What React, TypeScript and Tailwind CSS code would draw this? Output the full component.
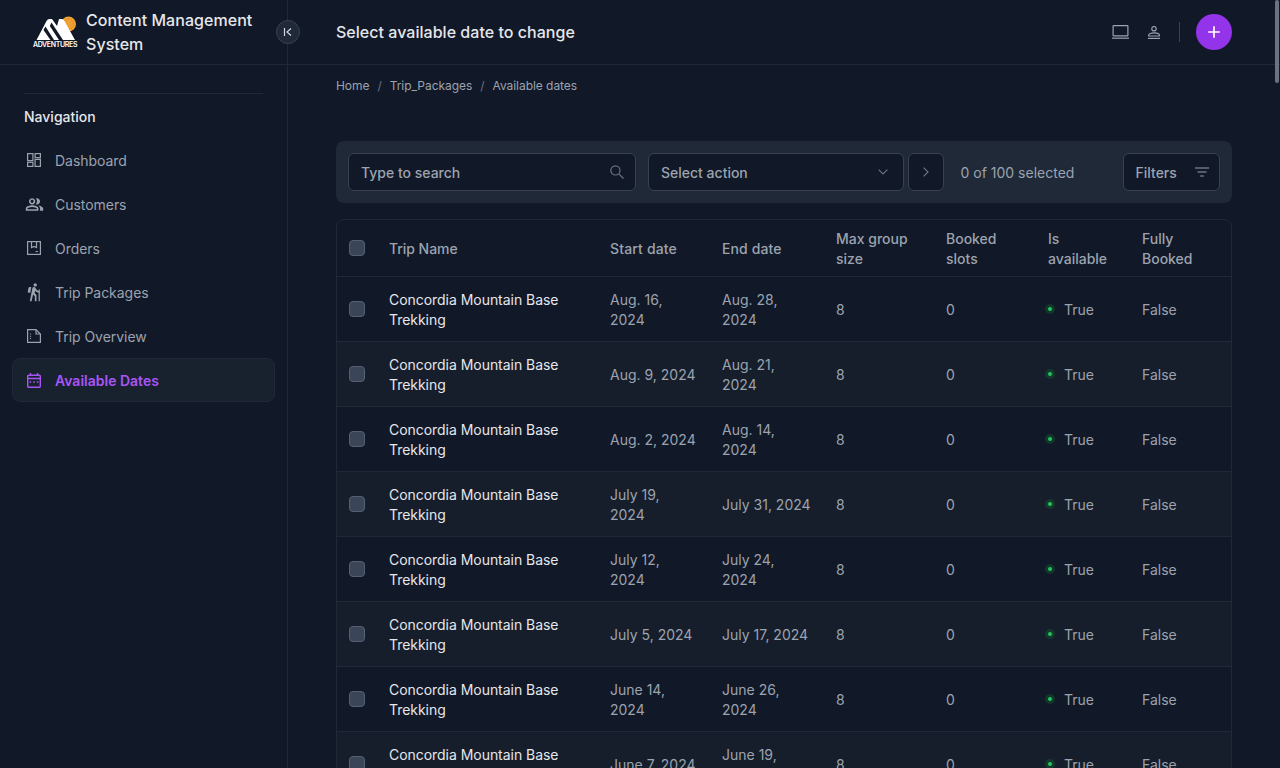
import { MdOutlinePeopleAlt, MdHiking, MdAdd } from "react-icons/md";

const font = { fontFamily: "Inter, 'Liberation Sans', sans-serif" };

function Stroke({ w, h, sw = 1.2, children }: { w: number; h: number; sw?: number; children: React.ReactNode }) {
  return (
    <svg width={w} height={h} viewBox={`0 0 ${w} ${h}`} fill="none" stroke="currentColor" strokeWidth={sw}>
      {children}
    </svg>
  );
}

const DashboardIcon = () => (
  <Stroke w={14} h={14}>
    <rect x="0.6" y="0.6" width="5.3" height="7" />
    <rect x="0.6" y="9.3" width="5.3" height="4.1" />
    <rect x="8.1" y="0.6" width="5.3" height="4.1" />
    <rect x="8.1" y="6.4" width="5.3" height="7" />
  </Stroke>
);
const PackageIcon = () => (
  <Stroke w={14} h={14}>
    <rect x="0.6" y="0.6" width="12.8" height="12.8" />
    <path d="M4.5 1v5.5l2.5-1 2.5 1V1M8.5 10.5h2.5" />
  </Stroke>
);
const NoteIcon = () => (
  <Stroke w={14} h={14}>
    <path d="M0.6 0.6h8.4l4.4 4.4v8.4H0.6z" />
    <path d="M9 1v4h4.2M3.5 4.5v.9M3.5 6.8v.9M3.5 9.1v.9" />
  </Stroke>
);
const CalendarIcon = () => (
  <Stroke w={14} h={15} sw={1.4}>
    <rect x="0.7" y="2.2" width="12.6" height="12.1" rx="1" />
    <path d="M3.5 0v3M10.5 0v3M1 5.5h12" />
    <path d="M2.6 9h1.6M6.2 9h1.6M9.8 9h1.6" />
  </Stroke>
);
const LaptopIcon = () => (
  <Stroke w={17} h={14}>
    <rect x="1.1" y="0.6" width="14.8" height="10.3" rx="0.6" />
    <path d="M0 13.2h17" />
  </Stroke>
);
const PersonIcon = () => (
  <Stroke w={12} h={13}>
    <circle cx="6" cy="2.7" r="2.2" />
    <path d="M0.6 10V9.4c0-1.5 2.6-2.5 5.4-2.5s5.4 1 5.4 2.5V10z" />
    <path d="M0 12.4h12" />
  </Stroke>
);
const SearchIcon = () => (
  <Stroke w={14} h={14}>
    <circle cx="5.4" cy="5.4" r="4.6" />
    <path d="M8.8 8.8l4.7 4.7" />
  </Stroke>
);
const FilterIcon = () => (
  <Stroke w={14} h={10} sw={1.3}>
    <path d="M0 1h14M2.5 5h9M5.2 9h3.6" />
  </Stroke>
);
const DownIcon = () => (
  <Stroke w={10} h={6}>
    <path d="M0.6 0.6 5 5l4.4-4.4" />
  </Stroke>
);
const RightIcon = () => (
  <Stroke w={6} h={10}>
    <path d="M0.6 0.6 5 5 0.6 9.4" />
  </Stroke>
);

function Logo() {
  return (
    <div className="flex w-[44px] flex-col items-center">
      <svg width="44" height="25" viewBox="0 0 44 25">
        <circle cx="35.5" cy="8" r="7.5" fill="#f0a030" />
        <circle cx="35.5" cy="8" r="5" fill="none" stroke="#b8802e" strokeWidth="0.6" strokeDasharray="1 1" />
        <path d="M3.5 24 13.5 5Q14.5 3 16.5 3L19 3 24 10 26 3 28.5 3Q30.5 3 31.5 5L42 24z" fill="#fff" />
        <path d="M12.5 10.5 21 24H17.5L10.5 14z" fill="#111827" />
        <path d="M18.5 6.5 30 24H26L16.8 10z" fill="#111827" />
      </svg>
      <span className="mt-[-1px] text-[7px] leading-[9px] font-semibold tracking-[-0.35px] whitespace-nowrap text-white">ADVENTURES</span>
    </div>
  );
}

const nav = [
  { label: "Dashboard", icon: <DashboardIcon /> },
  { label: "Customers", icon: <MdOutlinePeopleAlt size={19} /> },
  { label: "Orders", icon: <PackageIcon /> },
  { label: "Trip Packages", icon: <MdHiking size={20} /> },
  { label: "Trip Overview", icon: <NoteIcon /> },
];

const rows = [
  ["Aug. 16, 2024", "Aug. 28, 2024"],
  ["Aug. 9, 2024", "Aug. 21, 2024"],
  ["Aug. 2, 2024", "Aug. 14, 2024"],
  ["July 19, 2024", "July 31, 2024"],
  ["July 12, 2024", "July 24, 2024"],
  ["July 5, 2024", "July 17, 2024"],
  ["June 14, 2024", "June 26, 2024"],
  ["June 7, 2024", "June 19, 2024"],
];

const headers = [
  { label: "Trip Name", cls: "px-3 pt-[2px] font-medium tracking-[-0.05px]" },
  { label: "Start date", cls: "px-3 pt-[2px] font-medium tracking-[0.15px]" },
  { label: "End date", cls: "px-3 pt-[2px] font-medium tracking-[0.1px]" },
  { label: "Max group size", cls: "px-3 pt-[2px] font-medium" },
  { label: "Booked slots", cls: "px-3 pt-[2px] font-medium" },
  { label: "Is available", cls: "px-3 pt-[2px] font-medium" },
  { label: "Fully Booked", cls: "px-3 pt-[2px] font-medium" },
];

function Checkbox() {
  return <div className="h-4 w-4 rounded border border-[#566073] bg-[#3a4557]" />;
}

export default function App() {
  return (
    <div style={font} className="relative flex h-screen overflow-hidden bg-[#111827] text-sm text-[#9ca3af] antialiased">
      <aside className="flex w-[288px] shrink-0 flex-col border-r border-[#1f2937]">
        <div className="relative flex h-[65px] shrink-0 items-center gap-[9px] border-b border-[#1f2937] pl-[33px]">
          <Logo />
          <div className="text-base leading-6 font-medium tracking-[0.05px] text-[#e5e7eb]">Content Management System</div>
          <button className="absolute top-[20px] right-[-13px] flex h-6 w-6 items-center justify-center rounded-full border border-[#374151] bg-[#1f2937] text-[#d1d5db]">
            <svg width="10" height="10" viewBox="0 0 10 10" fill="none" stroke="currentColor" strokeWidth="1.2"><path d="M1.5 1v8M8 1.5 4 5l4 3.5" /></svg>
          </button>
        </div>
        <div className="flex flex-col px-3 pt-7">
          <div className="mx-3 border-t border-[#1f2937] pt-[13px] pb-[11px] font-medium text-[#e5e7eb]">Navigation</div>
          <nav className="flex flex-col">
            {nav.map((n) => (
              <div key={n.label} className="flex h-11 items-center gap-[11px] px-3">
                <span className="flex h-5 w-5 items-center justify-center">{n.icon}</span>
                <span className="pt-[2px] tracking-[-0.04px]">{n.label}</span>
              </div>
            ))}
            <div className="flex h-11 items-center gap-[11px] rounded-lg border border-[#1f2937] bg-[#18212e] px-[11px] font-semibold text-[#a855f7]">
              <span className="flex h-5 w-5 items-center justify-center"><CalendarIcon /></span>
              <span className="pt-[2px]">Available Dates</span>
            </div>
          </nav>
        </div>
      </aside>

      <main className="flex min-w-0 flex-1 flex-col">
        <header className="flex h-[65px] shrink-0 items-center justify-between border-b border-[#1f2937] px-[48px]">
          <h1 className="text-base font-medium tracking-[0.03px] text-[#e5e7eb]">Select available date to change</h1>
          <div className="flex items-center">
            <span className="mr-[19px] flex"><LaptopIcon /></span>
            <span className="mr-[19px] flex"><PersonIcon /></span>
            <div className="mr-[16px] h-5 border-l border-[#374151]" />
            <div className="flex h-9 w-9 items-center justify-center rounded-full bg-[#9333ea] text-white"><MdAdd size={20} /></div>
          </div>
        </header>

        <div className="flex flex-col px-[48px]">
          <div className="flex h-[42px] items-center gap-2 text-xs tracking-[-0.05px]">
            <span>Home</span><span className="text-[#6b7280]">/</span><span>Trip_Packages</span><span className="text-[#6b7280]">/</span><span>Available dates</span>
          </div>

          <div className="mt-[34px] flex h-[62px] items-center rounded-lg bg-[#1f2937] px-3">
            <div className="flex h-[38px] w-[288px] items-center justify-between rounded-md border border-[#374151] bg-[#111827] pr-[11px] pl-3 font-medium text-[#9ca3af]">
              <span className="pt-[2px]">Type to search</span>
              <span className="flex text-[#6b7280]"><SearchIcon /></span>
            </div>
            <div className="ml-3 flex h-[38px] w-[256px] items-center justify-between rounded-md border border-[#374151] bg-[#111827] pr-[15px] pl-3 font-medium">
              <span className="pt-[2px]">Select action</span>
              <span className="flex text-[#6b7280]"><DownIcon /></span>
            </div>
            <div className="ml-1 flex h-[38px] w-9 items-center justify-center rounded-md border border-[#374151] bg-[#111827] text-[#6b7280]"><RightIcon /></div>
            <span className="ml-[16.5px] pt-[2px]">0 of 100 selected</span>
            <div className="ml-auto flex h-[38px] w-[97px] items-center justify-between rounded-md border border-[#374151] bg-[#111827] pr-[10px] pl-[11.5px] font-medium">
              <span className="pt-[2px]">Filters</span>
              <span className="flex text-[#6b7280]"><FilterIcon /></span>
            </div>
          </div>

          <div className="mt-4 overflow-hidden rounded-lg border border-[#1f2937]">
            <table className="w-full table-fixed border-collapse">
              <colgroup>
                <col className="w-[40px]" />
                <col className="w-[221px]" />
                <col className="w-[112px]" />
                <col className="w-[114px]" />
                <col className="w-[110px]" />
                <col className="w-[102px]" />
                <col className="w-[94px]" />
                <col />
              </colgroup>
              <thead>
                <tr className="h-[56px] text-left">
                  <th className="pl-3"><Checkbox /></th>
                  {headers.map((h) => (
                    <th key={h.label} className={h.cls}>{h.label}</th>
                  ))}
                </tr>
              </thead>
              <tbody>
                {rows.map((r, i) => (
                  <tr key={i} className={`h-[65px] border-t border-[#1f2937] ${i % 2 === 1 ? "bg-[#161e2b]" : ""}`}>
                    <td className="pl-3"><Checkbox /></td>
                    <td className="px-3 pt-[2px] tracking-[-0.04px] text-[#e5e7eb]">Concordia Mountain Base Trekking</td>
                    <td className="px-3 pt-[2px]">{r[0]}</td>
                    <td className="px-3 pt-[2px]">{r[1]}</td>
                    <td className="px-3 pt-[2px]">8</td>
                    <td className="px-3 pt-[2px]">0</td>
                    <td className="pr-3 pl-[9px]">
                      <span className="flex items-center gap-[9px]">
                        <span className="flex h-[10px] w-[10px] items-center justify-center rounded-full bg-[#14532d]/50"><span className="h-1 w-1 rounded-full bg-[#22c55e]" /></span>
                        <span className="pt-[2px]">True</span>
                      </span>
                    </td>
                    <td className="px-3 pt-[2px]">False</td>
                  </tr>
                ))}
              </tbody>
            </table>
          </div>
        </div>
      </main>

      <div className="absolute top-0 right-[1px] h-[83px] w-1 rounded-full bg-[#6b7280]" />
    </div>
  );
}
